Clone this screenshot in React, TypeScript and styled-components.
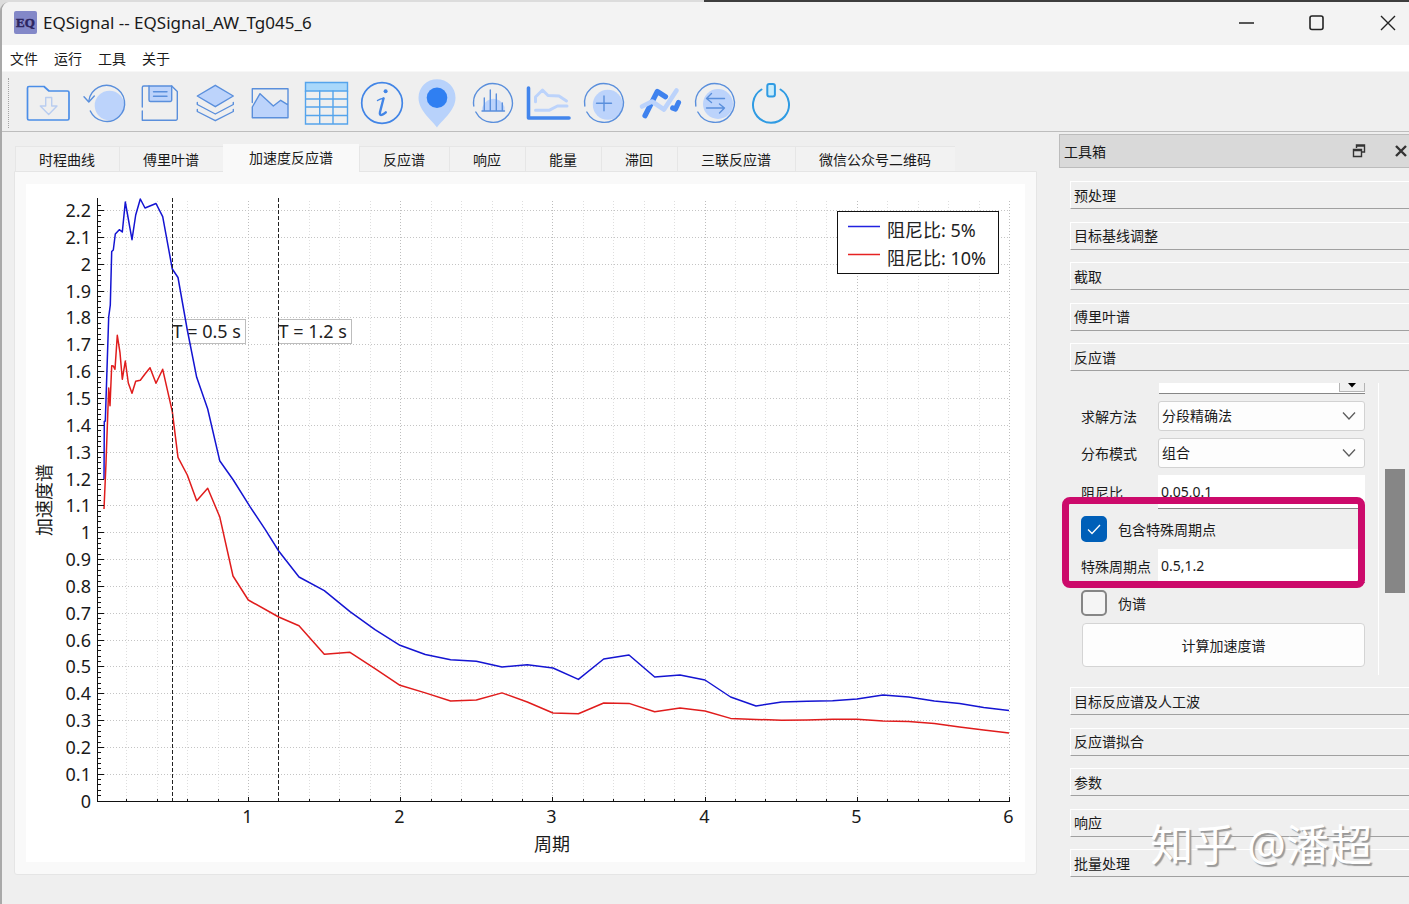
import React, { useState } from "react";
import styled, { createGlobalStyle } from "styled-components";

const FONT = '"Noto Sans", "Noto Sans CJK SC", sans-serif';

const GlobalStyle = createGlobalStyle`
  *, *::before, *::after { box-sizing: border-box; }
  body { margin: 0; background: #dcdcdc; font-family: ${FONT}; font-size: 14px; color: #1a1a1a; }
  button, input, select { font: inherit; color: inherit; }
`;

/* ---------- window frame ---------- */

const BackdropStrip = styled.div`
  height: 2px;
  background: linear-gradient(to right, #dcdcdc 50%, #3d3d3d 50%);
`;

const Window = styled.div`
  display: flex;
  flex-direction: column;
  min-height: calc(100vh - 2px);
  border-left: 2px solid #a9a9a9;
  border-top-left-radius: 9px;
  background: #efefef;
  overflow: hidden;
`;

const TitleBar = styled.header`
  display: flex;
  align-items: center;
  height: 43px;
  padding: 0 0 2px 12px;
  background: #f3f3f3;
`;

const Title = styled.h1`
  flex: 1;
  margin: 0 0 0 6px;
  font-size: 17px;
  font-weight: 400;
  line-height: 24px;
`;

const WindowControls = styled.div`
  display: flex;
  gap: 29px;
`;

const PlainButton = styled.button`
  display: flex;
  align-items: center;
  justify-content: center;
  padding: 0;
  border: 0;
  background: none;
`;

const WindowButton = styled(PlainButton)`
  width: 42px;
  height: 40px;
`;

const MenuBar = styled.nav`
  display: flex;
  height: 27px;
  background: #ffffff;
  border-bottom: 1px solid #f7f7f7;
`;

const MenuItem = styled(PlainButton)`
  padding: 0 8px;
`;

const ToolBar = styled.div`
  display: flex;
  align-items: center;
  height: 60px;
  padding: 2px 0 0 6px;
  border-bottom: 1px solid #bdbdbd;
`;

const Grip = styled.div`
  height: 50px;
  width: 1px;
  border-left: 1px dotted #a4a4a4;
`;

const ToolGroup = styled.div`
  display: flex;
  justify-content: space-between;
  width: 767px;
  margin-left: 17px;
`;

const Workspace = styled.div`
  display: flex;
  flex: 1;
`;

/* ---------- chart side ---------- */

const Main = styled.main`
  flex: 1;
  min-width: 0;
  padding: 12px 22px 28px 12px;
`;

const TabList = styled.div`
  display: flex;
  align-items: flex-end;
  padding-left: 1px;
`;

const Tab = styled.button<{ $active: boolean }>`
  height: ${(p) => (p.$active ? 28 : 25)}px;
  margin-bottom: ${(p) => (p.$active ? -1 : 0)}px;
  padding: ${(p) => (p.$active ? "0 26px" : "3px 24px 0")};
  border: 0;
  background: ${(p) => (p.$active ? "#f9f9f9" : "#f2f2f2")};
  box-shadow: inset 1px 1px 0 ${(p) => (p.$active ? "#f9f9f9" : "#e6e6e6")};
  line-height: 20px;
  white-space: nowrap;
  z-index: ${(p) => (p.$active ? 1 : 0)};
`;

const TabPanel = styled.section`
  padding: 12px 11px;
  border: 1px solid #e5e5e5;
  border-radius: 0 0 3px 3px;
  background: #f9f9f9;
`;

const ChartSvg = styled.svg`
  display: block;
  width: 100%;
  background: #ffffff;
  font-family: ${FONT};
  font-size: 18px;
`;

/* ---------- dock side ---------- */

const Dock = styled.aside`
  position: relative;
  width: 350px;
  flex: none;
  padding-top: 2px;
`;

const DockTitle = styled.div`
  display: flex;
  align-items: center;
  height: 34px;
  padding-left: 4px;
  border: 1px solid #bcbcbc;
  border-right: 0;
  background: #d9d9d9;
`;

const DockName = styled.h2`
  flex: 1;
  margin: 0;
  padding-top: 2px;
  font-size: 14px;
  font-weight: 400;
  line-height: 20px;
`;

const DockButton = styled(PlainButton)`
  width: 16px;
  height: 16px;
  margin-left: 26px;
`;

const DockBody = styled.div`
  padding: 13px 0 0 11px;
`;

const SectionGroup = styled.div`
  display: flex;
  flex-direction: column;
  justify-content: space-between;
  height: 190px;
`;

const Section = styled.button`
  height: 28px;
  padding: 1px 0 0 3px;
  border: 0;
  border-top: 1px solid #ffffff;
  border-left: 1px solid #ffffff;
  border-bottom: 1px solid #a0a0a0;
  background: #efefef;
  text-align: left;
  line-height: 20px;
`;

const ScrollArea = styled.div`
  position: relative;
  display: flex;
  margin: 12px 0;
`;

const Form = styled.form`
  display: flex;
  flex-direction: column;
  gap: 7px;
  flex: 1;
  margin-right: 13px;
  padding: 0 0 8px 11px;
`;

const FieldRow = styled.div`
  display: grid;
  grid-template-columns: 77px 1fr;
  align-items: center;
`;

const SpinRow = styled.div`
  display: flex;
  height: 11px;
  margin-left: 78px;
  background: #ffffff;
  border-bottom: 1px solid #868686;
`;

const SpinDown = styled(PlainButton)`
  width: 26px;
  height: 9px;
  margin-left: auto;
  align-items: flex-start;
  border: 1px solid #b4b4b4;
  border-top: 0;
  background: #f0f0f0;
`;

const SelectBox = styled.div`
  position: relative;
  svg { position: absolute; right: 9px; top: 10px; pointer-events: none; }
`;

const Select = styled.select`
  display: block;
  width: 100%;
  height: 30px;
  padding: 0 3px 2px;
  border: 1px solid #d2d2d2;
  border-radius: 3px;
  background: #fdfdfd;
  appearance: none;
`;

const TextInput = styled.input`
  width: 100%;
  height: 34px;
  padding: 0 3px;
  border: 0;
  border-bottom: 1px solid #868686;
  background: #ffffff;
`;

const CheckLabel = styled.label`
  position: relative;
  display: flex;
  align-items: center;
  gap: 11px;
  height: 26px;
  svg { position: absolute; left: 6px; top: 7px; pointer-events: none; }
`;

const CheckBox = styled.input`
  width: 26px;
  height: 26px;
  margin: 0;
  border: 2px solid #868686;
  border-radius: 5px;
  background: #f5f5f5;
  appearance: none;
  &:checked { border-color: #005fb8; background: #005fb8; }
`;

const SubmitButton = styled.button`
  height: 44px;
  margin-left: 1px;
  border: 1px solid #d4d4d4;
  border-radius: 4px;
  background: #fdfdfd;
`;

const ScrollTrack = styled.div`
  width: 31px;
  padding: 86px 4px 0 6px;
  border-left: 1px solid #ffffff;
`;

const ScrollThumb = styled.div`
  height: 124px;
  background: #868686;
`;

const Highlight = styled.div`
  position: absolute;
  left: -8px;
  right: 44px;
  top: 114px;
  height: 91px;
  border: 7px solid #cc0a6b;
  border-radius: 8px;
  pointer-events: none;
`;

const Watermark = styled.div`
  position: absolute;
  right: 37px;
  top: 683px;
  font-size: 43px;
  line-height: 60px;
  white-space: nowrap;
  color: #ffffff;
  text-shadow: 2px 2px 1px #9a9a9a;
  pointer-events: none;
`;

/* ---------- toolbar icons ---------- */

const ToolButton = styled(PlainButton)`
  width: 44px;
  height: 44px;
  svg {
    overflow: visible;
    fill: none;
    stroke: #5a8fdc;
    stroke-width: 1.4;
    stroke-linecap: round;
    stroke-linejoin: round;
  }
`;

const PALE = "#bcd3fb";

const TOOLS: { name: string; art: React.ReactNode }[] = [
  {
    name: "打开",
    art: (
      <>
        <path d="M3 5.5h15l5 4.5h18.5a1.5 1.5 0 0 1 1.5 1.5v26a1.5 1.5 0 0 1-1.5 1.5H3a1.5 1.5 0 0 1-1.5-1.5V7A1.5 1.5 0 0 1 3 5.5z" stroke="#4b8ee8" strokeWidth="1.7" />
        <path d="M19.7 16.5h6V25H31l-8.3 8.5L14.3 25h5.4z" stroke="#b9cdf0" />
      </>
    ),
  },
  {
    name: "刷新",
    art: (
      <>
        <circle cx="27.5" cy="24.5" r="14.8" fill={PALE} stroke="none" />
        <path d="M6.8 20A18 18 0 1 1 8.3 30" />
        <path d="M2 15.7 6.8 21l5.5-6" />
      </>
    ),
  },
  {
    name: "保存",
    art: (
      <>
        <path d="M12 5h22.7v14a1.5 1.5 0 0 1-1.5 1.5H13.5A1.5 1.5 0 0 1 12 19z" fill={PALE} />
        <path d="M16.5 10.7H30M16.5 15.3H30" />
        <path d="M5.3 26V6.5A1.5 1.5 0 0 1 6.8 5H12M34.7 5l5.6 5.5v27.3a1.5 1.5 0 0 1-1.5 1.5H5.3V30" />
      </>
    ),
  },
  {
    name: "图层",
    art: (
      <>
        <path d="M22.3 4.3 40.3 15l-18 10.7L4.3 15z" fill={PALE} />
        <path d="M4.3 21.5v2l18 9.5 18-9.5v-2M4.3 28.5v2l18 9.2 18-9.2v-2" />
      </>
    ),
  },
  {
    name: "图像",
    art: (
      <>
        <path d="M4.3 26 12 12.7 25.3 25l7.4-5.7 7.3 4.5v12.9H4.3z" fill={PALE} stroke="none" />
        <path d="M4.3 21.5V7.7H40v29H4.3V26L12 12.7 25.3 25l7.4-5.7 7.3 4.5" />
      </>
    ),
  },
  {
    name: "表格",
    art: (
      <g stroke="#55a4ec" strokeLinejoin="miter">
        <path d="M1.5 1.5h42V10h-42z" fill="#a9d8fb" />
        <path d="M1.5 10v33h42V10M15.7 10v33M29 10v33M1.5 18h42M1.5 26h42M1.5 34.5h42" />
      </g>
    ),
  },
  {
    name: "信息",
    art: (
      <g stroke="#4285e6">
        <circle cx="22" cy="22" r="20.3" strokeWidth="1.7" />
        <circle cx="25.6" cy="10.3" r="2" fill="#4285e6" stroke="none" />
        <path d="M17.5 19.5c2-1.5 4-2 6.300-2.300" />
        <path d="M23.500 17.500 20 31c-.6 2.800.4 3.400 2.400 2.600 1.300-.5 2.300-1.300 3.400-2.300" strokeWidth="2.400" />
      </g>
    ),
  },
  {
    name: "定位",
    art: (
      <g stroke="none">
        <path d="M22 46.500C18 40 3.500 30 3.500 16.700a18.500 18.500 0 0 1 37 0C40.500 30 26 40 22 46.500z" fill="#b8d2fb" />
        <circle cx="22" cy="16.700" r="10.300" fill="#2f7ff2" />
      </g>
    ),
  },
  {
    name: "频谱",
    art: (
      <>
        <path d="M11 30a11.500 11.500 0 0 1 22.500-4v4z" fill={PALE} stroke="none" />
        <path d="M4.800 31A19.400 19.400 0 1 0 2.800 25M11 30h22.500M13.300 29V17M19.300 29V9M25.300 29V13M31.300 29v-7" />
      </>
    ),
  },
  {
    name: "曲线",
    art: (
      <>
        <path d="M9.500 20.700V16l7-7 5.500 5.500 11 .5 7.500 5M9.500 29.300H23l8.500-4.300H41" stroke={PALE} strokeWidth="3" />
        <path d="M2.500 7v30H43" stroke="#4285ec" strokeWidth="3.600" />
      </>
    ),
  },
  {
    name: "添加",
    art: (
      <>
        <circle cx="25.800" cy="23.800" r="15" fill={PALE} stroke="none" />
        <path d="M4.800 31A19.400 19.400 0 1 0 2.800 25M14.500 22.300h15M22 15v14.700" />
      </>
    ),
  },
  {
    name: "趋势",
    art: (
      <>
        <path d="M7 34.700 19.300 10.500l8.200 5.200M34.700 27l2.800 1 3-6.500" stroke="#3f82ee" strokeWidth="5.200" />
        <path d="M4 25.500 14 20.500l12 8L38.500 9.500" stroke={PALE} strokeWidth="4.600" />
      </>
    ),
  },
  {
    name: "转换",
    art: (
      <>
        <circle cx="25" cy="23" r="15" fill={PALE} stroke="none" />
        <path d="M4.800 31A19.400 19.400 0 1 0 2.800 25M31.500 17.500H13.500l5-5M13.500 17.500l5 4M13.500 27h18l-5-4M31.500 27l-5 5" />
      </>
    ),
  },
  {
    name: "退出",
    art: (
      <g stroke="#2f9be3" strokeWidth="2">
        <path d="M12.500 8.500a18 18 0 1 0 19 0" />
        <rect x="18.300" y="3" width="7.600" height="12.500" rx="2" fill="#c9ecfb" />
      </g>
    ),
  },
];

/* ---------- chart ---------- */

const BLUE =
  "104,479 104.3,421.5 105.3,421 107.3,360 108.7,317 110.3,305 111.7,251.5 113.3,250 115.3,234 119.3,229.7 122.3,232 125.3,202 132,239.7 135.7,215 140.3,199 145,208 156,203.5 162.7,216.7 172.3,269 178,277.5 187.3,330 196.7,377.3 207.7,409 219.7,460.7 233.3,480 250,506.7 265.3,529.7 278.7,551 299,577 324.3,590.7 350,611.7 375,629.7 400,645.3 425.3,654.5 450.6,659.8 476.3,661.2 502,667 527.3,664.7 553,668 578.4,679.4 603.7,659 629,655 654.7,677 680,675 705,680 730.6,697 756,706 781.6,702 807,701.3 832.6,700.7 857,699 883,695 908.6,697 934.3,701 959.6,703.5 983.7,707.5 1009,710.6";
const RED =
  "104,509 106,463 107.3,426.7 108.7,388 110,405.7 111.7,365.7 113.3,366 115,369.3 117.3,335.3 120,352.7 122.3,379.3 125.3,361 128.3,383 132,393.3 135.7,381.3 140.3,380.3 145,374 150,367.7 156,383.3 162.7,369.3 172.3,411.7 178,457.3 187.3,475 196.7,500.7 207.7,488.3 219.7,516.7 233,576 248.3,600 278.7,617 299,625.7 324.3,654.3 350,652.3 375,668.7 400,685.3 425.3,692.9 450.6,701 476.3,700 502,692.9 527.3,702 553,713 578.4,713.7 603.7,703 629,703.4 654.7,711.7 680,708 705,711 730.6,718.4 756,719.4 781.6,720.3 807,720 832.6,719.3 857,719.3 883,721 908.6,721.5 934.3,723.5 959.6,727 983.7,730 1009,733";

const AXIS_X = 97.5;
const AXIS_Y = 801.5;
const xAt = (period: number) => Math.round(95.8 + period * 152.2) + 0.5;
const yAt = (value: number) => Math.round(800.6 - value * 268.4) + 0.5;
const range = (n: number) => Array.from({ length: n }, (_, i) => i);

const MARKERS = [
  { period: 0.5, text: "T = 0.5 s" },
  { period: 1.2, text: "T = 1.2 s" },
];

const LEGEND = [
  { color: "#2222e0", text: "阻尼比: 5%", y: 226.5 },
  { color: "#e62222", text: "阻尼比: 10%", y: 254.5 },
];

function SpectrumChart() {
  return (
    <ChartSvg viewBox="26 184 999 678" role="img" aria-label="加速度反应谱">
      <g strokeDasharray="1 2" shapeRendering="crispEdges">
        {range(30).map((i) => (
          <line key={i} x1={xAt((i + 1) / 5)} x2={xAt((i + 1) / 5)} y1={201} y2={AXIS_Y} stroke={(i + 1) % 5 ? "#dedede" : "#bdbdbd"} />
        ))}
        {range(22).map((i) => (
          <line key={i} x1={AXIS_X} x2={1009} y1={yAt((i + 1) / 10)} y2={yAt((i + 1) / 10)} stroke="#c4c4c4" />
        ))}
      </g>

      {MARKERS.map((m) => (
        <g key={m.text}>
          <rect x={xAt(m.period)} y={319.5} width={73} height={24} fill="#ffffff" stroke="#bdbdbd" />
          <text x={xAt(m.period)} y={338} fill="#222">{m.text}</text>
        </g>
      ))}

      <g fill="none" strokeWidth={1.5} strokeLinejoin="round">
        <polyline points={BLUE} stroke="#1414d2" />
        <polyline points={RED} stroke="#e01c1c" />
      </g>

      {MARKERS.map((m) => (
        <line key={m.text} x1={xAt(m.period)} x2={xAt(m.period)} y1={198} y2={AXIS_Y} stroke="#222" strokeDasharray="4 2" />
      ))}

      <g stroke="#111" shapeRendering="crispEdges">
        <path d={`M${AXIS_X} 198V${AXIS_Y}H1010`} fill="none" />
        {range(112).map((i) => (
          <line key={i} x1={AXIS_X} x2={AXIS_X + (i % 5 ? 3 : 6)} y1={yAt(i / 50)} y2={yAt(i / 50)} />
        ))}
        {range(30).map((i) => (
          <line key={i} x1={xAt((i + 1) / 5)} x2={xAt((i + 1) / 5)} y1={AXIS_Y} y2={AXIS_Y - ((i + 1) % 5 ? 3 : 5)} />
        ))}
      </g>

      <g fill="#1a1a1a">
        {range(23).map((i) => (
          <text key={i} x={91} y={yAt(i / 10) + 6} textAnchor="end">{i / 10}</text>
        ))}
        {range(6).map((i) => (
          <text key={i} x={xAt(i + 1) - 1} y={823} textAnchor="middle">{i + 1}</text>
        ))}
        <text x={552} y={851} textAnchor="middle">周期</text>
        <text transform="translate(51 500) rotate(-90)" textAnchor="middle">加速度谱</text>
      </g>

      <rect x={837.5} y={211.5} width={161} height={62} fill="#ffffff" stroke="#111" />
      {LEGEND.map((l) => (
        <g key={l.text}>
          <line x1={848} x2={880} y1={l.y} y2={l.y} stroke={l.color} strokeWidth={1.5} />
          <text x={887} y={l.y + 10} fill="#222">{l.text}</text>
        </g>
      ))}
    </ChartSvg>
  );
}

/* ---------- app ---------- */

const MENUS = ["文件", "运行", "工具", "关于"];
const TABS = ["时程曲线", "傅里叶谱", "加速度反应谱", "反应谱", "响应", "能量", "滞回", "三联反应谱", "微信公众号二维码"];
const UPPER = ["预处理", "目标基线调整", "截取", "傅里叶谱", "反应谱"];
const LOWER = ["目标反应谱及人工波", "反应谱拟合", "参数", "响应", "批量处理"];

function Combo({ id, label, options }: { id: string; label: string; options: string[] }) {
  return (
    <FieldRow>
      <label htmlFor={id}>{label}</label>
      <SelectBox>
        <Select id={id}>
          {options.map((o) => <option key={o}>{o}</option>)}
        </Select>
        <svg width="14" height="10" viewBox="0 0 14 10" fill="none" stroke="#5c5c5c" strokeWidth="1.3">
          <path d="M1 1.5 7 8l6-6.5" />
        </svg>
      </SelectBox>
    </FieldRow>
  );
}

function Check({ label, initial }: { label: string; initial: boolean }) {
  const [on, setOn] = useState(initial);
  return (
    <CheckLabel>
      <CheckBox type="checkbox" checked={on} onChange={() => setOn(!on)} />
      {on && (
        <svg width="14" height="12" viewBox="0 0 14 12" fill="none" stroke="#ffffff" strokeWidth="1.3">
          <path d="M1 6.5 5 10.5 13 2" />
        </svg>
      )}
      {label}
    </CheckLabel>
  );
}

export default function App() {
  const [tab, setTab] = useState(TABS[2]);
  return (
    <>
      <GlobalStyle />
      <BackdropStrip />
      <Window>
        <TitleBar>
          <svg width="23" height="23" viewBox="0 0 23 23">
            <rect width="23" height="23" rx="2" fill="#8388c8" />
            <text x="11.5" y="15.5" textAnchor="middle" fontFamily="Liberation Serif, serif" fontWeight="700" fontSize="13" fill="#2c2560" stroke="#2c2560" strokeWidth="0.5">EQ</text>
          </svg>
          <Title>EQSignal -- EQSignal_AW_Tg045_6</Title>
          <WindowControls>
            <WindowButton aria-label="最小化">
              <svg width="16" height="16" stroke="#222" strokeWidth="1.4"><path d="M1 8h15" /></svg>
            </WindowButton>
            <WindowButton aria-label="最大化">
              <svg width="16" height="16" fill="none" stroke="#222" strokeWidth="1.6"><rect x="1" y="1" width="13" height="13.5" rx="2" /></svg>
            </WindowButton>
            <WindowButton aria-label="关闭">
              <svg width="16" height="16" stroke="#222" strokeWidth="1.4"><path d="M1 1 15 15M15 1 1 15" /></svg>
            </WindowButton>
          </WindowControls>
        </TitleBar>

        <MenuBar>
          {MENUS.map((m) => <MenuItem key={m}>{m}</MenuItem>)}
        </MenuBar>

        <ToolBar>
          <Grip />
          <ToolGroup>
            {TOOLS.map((t) => (
              <ToolButton key={t.name} aria-label={t.name}>
                <svg width="44" height="44" viewBox="0 0 44 44">{t.art}</svg>
              </ToolButton>
            ))}
          </ToolGroup>
        </ToolBar>

        <Workspace>
          <Main>
            <TabList role="tablist">
              {TABS.map((t) => (
                <Tab key={t} role="tab" aria-selected={t === tab} $active={t === tab} onClick={() => setTab(t)}>{t}</Tab>
              ))}
            </TabList>
            <TabPanel role="tabpanel">
              <SpectrumChart />
            </TabPanel>
          </Main>

          <Dock>
            <DockTitle>
              <DockName>工具箱</DockName>
              <DockButton aria-label="浮动">
                <svg width="14" height="14" fill="none" stroke="#333" strokeWidth="1.4">
                  <path d="M4.5 4V1h8v7h-3M4.5 2h8" />
                  <path d="M1.5 5.5h8v7h-8zM1.5 6.500h8" />
                </svg>
              </DockButton>
              <DockButton aria-label="关闭工具箱">
                <svg width="12" height="12" stroke="#333" strokeWidth="2.4"><path d="M1 1l10 10M11 1 1 11" /></svg>
              </DockButton>
            </DockTitle>
            <DockBody>
              <SectionGroup>
                {UPPER.map((s) => <Section key={s}>{s}</Section>)}
              </SectionGroup>
              <ScrollArea>
                <Form onSubmit={(e) => e.preventDefault()}>
                  <SpinRow>
                    <SpinDown type="button" aria-label="减少">
                      <svg width="8" height="5" fill="#000"><path d="M0 0h8L4 4.5z" /></svg>
                    </SpinDown>
                  </SpinRow>
                  <Combo id="method" label="求解方法" options={["分段精确法"]} />
                  <Combo id="mode" label="分布模式" options={["组合"]} />
                  <FieldRow>
                    <label htmlFor="damping">阻尼比</label>
                    <TextInput id="damping" defaultValue="0.05,0.1" />
                  </FieldRow>
                  <Check label="包含特殊周期点" initial />
                  <FieldRow>
                    <label htmlFor="periods">特殊周期点</label>
                    <TextInput id="periods" defaultValue="0.5,1.2" />
                  </FieldRow>
                  <Check label="伪谱" initial={false} />
                  <SubmitButton type="submit">计算加速度谱</SubmitButton>
                </Form>
                <ScrollTrack>
                  <ScrollThumb />
                </ScrollTrack>
                <Highlight />
              </ScrollArea>
              <SectionGroup>
                {LOWER.map((s) => <Section key={s}>{s}</Section>)}
              </SectionGroup>
            </DockBody>
            <Watermark>知乎 @潘超</Watermark>
          </Dock>
        </Workspace>
      </Window>
    </>
  );
}
